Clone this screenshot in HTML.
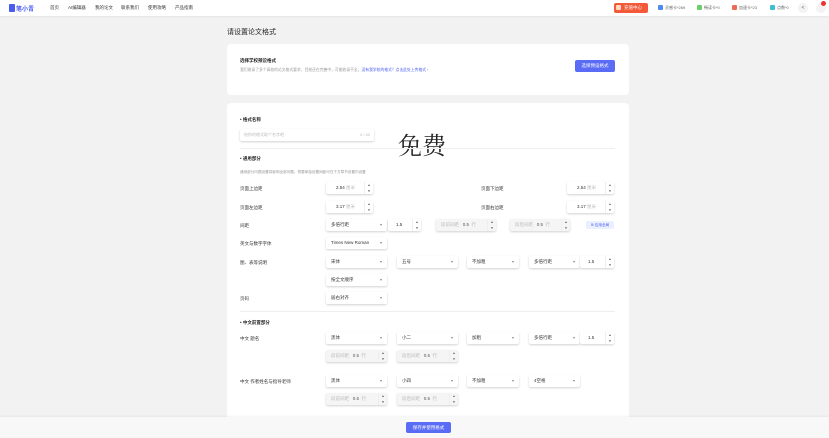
<!DOCTYPE html>
<html><head><meta charset="utf-8"><style>
*{margin:0;padding:0;box-sizing:border-box}
body{width:829px;height:438px;overflow:hidden;background:#f2f2f2;font-family:"Liberation Sans","Noto Sans CJK SC",sans-serif;color:#333;position:relative;font-size:5px}
.a{position:absolute;white-space:nowrap}
.hdr{position:absolute;left:0;top:0;width:829px;height:16px;background:#fff;box-shadow:0 1px 2px rgba(0,0,0,.06)}
.card{position:absolute;background:#fff;border-radius:4px}
.sel{position:absolute;height:12px;background:#fff;border-radius:2px;box-shadow:0 1px 2px rgba(0,0,0,.18);font-size:4.5px;line-height:12px;padding-left:5px;color:#333}
.sel:after{content:"▾";position:absolute;right:5px;top:0;color:#888;font-size:4px}
.num{position:absolute;height:12px;background:#fff;border-radius:2px;box-shadow:0 1px 2px rgba(0,0,0,.18);font-size:4.5px;line-height:12px;color:#333}
.num.dis{background:#f5f5f5;color:#555}
.num i{font-style:normal;color:#bbb}
.num b{position:absolute;right:0;top:0;width:9px;height:12px;border-left:1px solid #eee;font-weight:normal;font-size:3px;line-height:6px;text-align:center;color:#444}
.lbl{position:absolute;font-size:4.5px;color:#333;white-space:nowrap}
.sec{position:absolute;font-size:4.5px;font-weight:bold;color:#222;white-space:nowrap}
.div{position:absolute;left:240px;width:375px;height:1px;background:#eee}
</style></head><body>
<div class="hdr">
 <div class="a" style="left:9px;top:4px;width:6px;height:8px;background:#4a5cf0;border-radius:1px"></div>
 <div class="a" style="left:16px;top:4px;font-size:6px;color:#4a5cf0;font-weight:bold">笔小青</div>
 <div class="a" style="left:50px;top:5px;font-size:4.5px">首页</div>
 <div class="a" style="left:68px;top:5px;font-size:4.5px">AI编辑器</div>
 <div class="a" style="left:95px;top:5px;font-size:4.5px">我的论文</div>
 <div class="a" style="left:121px;top:5px;font-size:4.5px">联系我们</div>
 <div class="a" style="left:148px;top:5px;font-size:4.5px">使用攻略</div>
 <div class="a" style="left:175px;top:5px;font-size:4.5px">产品指南</div>
 <div class="a" style="left:614px;top:3px;width:34px;height:10px;background:#f25a3a;border-radius:2px;color:#fff;font-size:4.5px;line-height:10px;padding-left:10px">充值中心</div>
 <div class="a" style="left:616px;top:5px;width:5px;height:5px;background:#ffd9c0;border-radius:1px"></div>
 <div class="a" style="left:658px;top:5px;width:5px;height:5px;background:#4a8cf0;border-radius:1px"></div>
 <div class="a" style="left:665px;top:5px;font-size:4px;color:#666">灵感卡*269</div>
 <div class="a" style="left:697px;top:5px;width:5px;height:5px;background:#6ccf6c;border-radius:1px"></div>
 <div class="a" style="left:704px;top:5px;font-size:4px;color:#666">畅读卡*0</div>
 <div class="a" style="left:732px;top:5px;width:5px;height:5px;background:#f06a5a;border-radius:1px"></div>
 <div class="a" style="left:739px;top:5px;font-size:4px;color:#666">加速卡*23</div>
 <div class="a" style="left:770px;top:5px;width:5px;height:5px;background:#3ac0d0;border-radius:1px"></div>
 <div class="a" style="left:777px;top:5px;font-size:4px;color:#666">点数*0</div>
 <div class="a" style="left:798px;top:3px;width:10px;height:10px;background:#f3f3f3;border-radius:50%;font-size:5px;text-align:center;line-height:10px;color:#666">&lt;</div>
 <div class="a" style="left:816px;top:3px;width:10px;height:10px;background:#f3f3f3;border-radius:50%"></div>
 <div class="a" style="left:821px;top:1px;width:5px;height:5px;background:#e33;border-radius:50%"></div>
</div>
<div class="a" style="left:227px;top:27px;font-size:7px;color:#222">请设置论文格式</div>
<div class="card" style="left:227px;top:44px;width:402px;height:51px">
 <div class="a" style="left:13px;top:14px;font-size:4.5px;font-weight:bold;color:#222">选择学校预设格式</div>
 <div class="a" style="left:13px;top:24px;font-size:3.8px;color:#999">我们收录了多个高校的论文格式要求，目前还在完善中，可能收录不全。<span style="color:#4a5cf0">没有我学校的格式？点击此处上传格式 ›</span></div>
 <div class="a" style="left:348px;top:16px;width:40px;height:12px;background:#5a6cf5;border-radius:2px;color:#fff;font-size:4.5px;line-height:12px;text-align:center">选择预设格式</div>
</div>
<div class="card" style="left:227px;top:103px;width:402px;height:330px"></div>
<div class="sec" style="left:240px;top:117px">• 格式名称</div>
<div class="a" style="left:240px;top:129px;width:134px;height:12px;background:#fff;box-shadow:0 1px 2px rgba(0,0,0,.18);border-radius:2px;font-size:4px;line-height:12px;padding-left:4px;color:#bbb">给你的格式取个名字吧<span style="position:absolute;right:4px">0 / 40</span></div>
<div class="a" style="left:398px;top:128px;font-size:24px;font-family:'Noto Serif CJK SC','Liberation Serif',serif;color:#222;line-height:32px">免费</div>
<div class="div" style="top:148px"></div>
<div class="sec" style="left:240px;top:156px">• 通用部分</div>
<div class="lbl" style="left:240px;top:170px;font-size:3.6px;color:#999">通用部分问题设置将影响全部问题。想要单独设置间距可在下方章节设置内设置</div>
<div class="lbl" style="left:240px;top:186px">页面上边距</div>
<div class="num" style="left:326px;top:182px;width:47px;padding-left:10px">2.54 <i>厘米</i><b>▲<br>▼</b></div>
<div class="lbl" style="left:481px;top:186px">页面下边距</div>
<div class="num" style="left:567px;top:182px;width:47px;padding-left:10px">2.54 <i>厘米</i><b>▲<br>▼</b></div>
<div class="lbl" style="left:240px;top:205px">页面左边距</div>
<div class="num" style="left:326px;top:201px;width:47px;padding-left:10px">3.17 <i>厘米</i><b>▲<br>▼</b></div>
<div class="lbl" style="left:481px;top:205px">页面右边距</div>
<div class="num" style="left:567px;top:201px;width:47px;padding-left:10px">3.17 <i>厘米</i><b>▲<br>▼</b></div>
<div class="lbl" style="left:240px;top:223px">间距</div>
<div class="sel" style="left:326px;top:219px;width:61px">多倍行距</div>
<div class="num" style="left:388px;top:219px;width:33px;padding-left:8px">1.5<b>▲<br>▼</b></div>
<div class="num dis" style="left:436px;top:219px;width:60px;padding-left:5px"><i>段前间距</i>&nbsp;&nbsp; 0.5 &nbsp;<i>行</i><b>▲<br>▼</b></div>
<div class="num dis" style="left:510px;top:219px;width:60px;padding-left:5px"><i>段后间距</i>&nbsp;&nbsp; 0.5 &nbsp;<i>行</i><b>▲<br>▼</b></div>
<div class="a" style="left:586px;top:221px;width:28px;height:8px;background:#eaf0ff;color:#4a5cf0;font-size:3.6px;line-height:8px;text-align:center;border-radius:1px">⊞ 应用全局</div>
<div class="lbl" style="left:240px;top:241px">英文与数字字体</div>
<div class="sel" style="left:326px;top:237px;width:61px">Times New Roman</div>
<div class="lbl" style="left:240px;top:260px">图、表等说明</div>
<div class="sel" style="left:326px;top:256px;width:61px">宋体</div>
<div class="sel" style="left:397px;top:256px;width:61px">五号</div>
<div class="sel" style="left:467px;top:256px;width:52px">不加粗</div>
<div class="sel" style="left:529px;top:256px;width:51px">多倍行距</div>
<div class="num" style="left:580px;top:256px;width:34px;padding-left:8px">1.5<b>▲<br>▼</b></div>
<div class="sel" style="left:326px;top:274px;width:61px">按全文顺序</div>
<div class="lbl" style="left:240px;top:296px">页码</div>
<div class="sel" style="left:326px;top:292px;width:61px">居右对齐</div>
<div class="div" style="top:311px"></div>
<div class="sec" style="left:240px;top:320px">• 中文前置部分</div>
<div class="lbl" style="left:240px;top:336px">中文 题名</div>
<div class="sel" style="left:326px;top:332px;width:61px">黑体</div>
<div class="sel" style="left:397px;top:332px;width:61px">小二</div>
<div class="sel" style="left:467px;top:332px;width:52px">加粗</div>
<div class="sel" style="left:529px;top:332px;width:51px">多倍行距</div>
<div class="num" style="left:580px;top:332px;width:34px;padding-left:8px">1.5<b>▲<br>▼</b></div>
<div class="num dis" style="left:326px;top:350px;width:61px;padding-left:5px"><i>段前间距</i>&nbsp;&nbsp; 0.5 &nbsp;<i>行</i><b>▲<br>▼</b></div>
<div class="num dis" style="left:397px;top:350px;width:61px;padding-left:5px"><i>段后间距</i>&nbsp;&nbsp; 0.5 &nbsp;<i>行</i><b>▲<br>▼</b></div>
<div class="lbl" style="left:240px;top:379px">中文 作者姓名与指导老师</div>
<div class="sel" style="left:326px;top:375px;width:61px">黑体</div>
<div class="sel" style="left:397px;top:375px;width:61px">小四</div>
<div class="sel" style="left:467px;top:375px;width:52px">不加粗</div>
<div class="sel" style="left:529px;top:375px;width:51px">4空格</div>
<div class="num dis" style="left:326px;top:393px;width:61px;padding-left:5px"><i>段前间距</i>&nbsp;&nbsp; 0.5 &nbsp;<i>行</i><b>▲<br>▼</b></div>
<div class="num dis" style="left:397px;top:393px;width:61px;padding-left:5px"><i>段后间距</i>&nbsp;&nbsp; 0.5 &nbsp;<i>行</i><b>▲<br>▼</b></div>
<div class="a" style="left:0;top:417px;width:829px;height:21px;background:#f8f8f8;box-shadow:0 -1px 2px rgba(0,0,0,.05)"></div>
<div class="a" style="left:406px;top:422px;width:45px;height:11px;background:#5a6cf5;border-radius:2px;color:#fff;font-size:4.5px;line-height:11px;text-align:center">保存并使用格式</div>
</body></html>
